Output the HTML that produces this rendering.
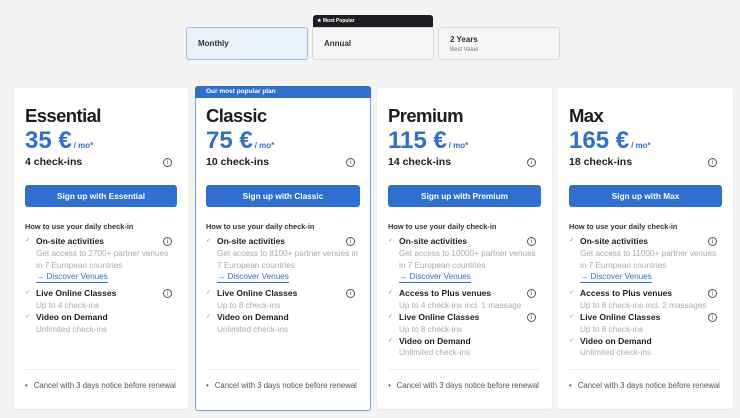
<!DOCTYPE html>
<html><head><meta charset="utf-8">
<style>
*{box-sizing:border-box;margin:0;padding:0}
body{width:740px;height:418px;background:#f4f4f5;font-family:"Liberation Sans",sans-serif;position:relative;overflow:hidden;color:#1d1d1f}
.tog{position:absolute;top:27px;height:33px;width:122px;border:1px solid #d8d9dc;border-radius:3px;background:#f6f6f7;font-size:8px;font-weight:bold;padding-left:11px;display:flex;flex-direction:column;justify-content:center;color:#333}
.tog small{font-weight:normal;font-size:6px;color:#777;margin-top:3px}
.card{position:absolute;top:88px;height:321px;background:#fff;border-radius:3px;box-shadow:0 1px 2px rgba(0,0,0,.05)}
.in{position:absolute;left:11px;right:11px;top:0}
h2{position:absolute;top:17px;font-size:18.5px;font-weight:bold;letter-spacing:-.6px}
.pr{position:absolute;top:39px;font-size:24px;font-weight:bold;color:#2f6fd1;white-space:nowrap}
.pr span{font-size:8px;font-weight:bold;margin-left:2px}
.ci{position:absolute;top:68px;left:0;right:0;font-size:10.5px;font-weight:bold}
.info{display:inline-block;width:9px;height:9px;border:1px solid #555;border-radius:50%;font-size:6.5px;line-height:7px;text-align:center;color:#555;font-weight:normal;font-family:"Liberation Sans",sans-serif}
.ci .info{position:absolute;right:5px;top:2px}
.btn{position:absolute;top:97px;left:0;right:0;height:22px;background:#2f6fd1;color:#fff;border-radius:3px;font-size:8.3px;font-weight:bold;text-align:center;line-height:22px}
.list{position:absolute;top:134px;left:0;right:0}
.hd{font-size:7.4px;font-weight:bold;color:#333;margin-bottom:5px}
.it{position:relative;padding-left:11px;font-size:8.5px;line-height:11.8px}
.it b{color:#222;display:block}
.it:before{content:"✓";position:absolute;left:0;top:0;font-size:6px;color:#888}
.it .s{color:#a8aab3;font-size:8.2px;white-space:nowrap}
.it .info{position:absolute;right:5px;top:1px}
.dv{color:#2f6fd1;font-size:8.2px;border-bottom:1px solid #2f6fd1;display:inline-block;line-height:10px;margin:0 0 5px}
.ft{position:absolute;top:281px;left:0;right:0;border-top:1px solid #eee;padding-top:11px;font-size:7.8px;color:#555;white-space:nowrap}
.ft:before{content:"•";margin-right:6px}
</style></head><body>
<div class="tog" style="left:186px;background:#eaf1fb;border-color:#9dbde9">Monthly</div>
<div style="position:absolute;left:313px;top:15px;width:120px;height:12px;background:#1d1e22;border-radius:3px 3px 0 0;color:#fff;font-size:5px;font-weight:bold;padding:3px 0 0 4px">★ Most Popular</div>
<div class="tog" style="left:312px">Annual</div>
<div class="tog" style="left:438px">2 Years<small>Best Value</small></div>

<div class="card" style="left:14px;width:174px"><div class="in">
<h2>Essential</h2><div class="pr">35 €<span>/ mo*</span></div>
<div class="ci">4 check-ins <span class="info">i</span></div>
<div class="btn">Sign up with Essential</div>
<div class="list"><div class="hd">How to use your daily check-in</div>
<div class="it"><b>On-site activities</b><span class="info">i</span><div class="s">Get access to 2700+ partner venues<br>in 7 European countries</div><span class="dv">→ Discover Venues</span></div>
<div class="it"><b>Live Online Classes</b><span class="info">i</span><div class="s">Up to 4 check-ins</div></div>
<div class="it"><b>Video on Demand</b><div class="s">Unlimited check-ins</div></div>
</div><div class="ft">Cancel with 3 days notice before renewal</div></div></div>

<div class="card" style="left:195px;width:176px;top:86px;height:325px;border:1px solid #7aa6e6">
<div style="position:absolute;left:-1px;right:-1px;top:-1px;height:12px;background:#2f6fd1;color:#fff;font-size:6.5px;font-weight:bold;padding:2px 0 0 11px;border-radius:3px 3px 0 0">Our most popular plan</div>
<div class="in" style="left:10px;right:10px;top:1px">
<h2>Classic</h2><div class="pr">75 €<span>/ mo*</span></div>
<div class="ci">10 check-ins <span class="info">i</span></div>
<div class="btn">Sign up with Classic</div>
<div class="list"><div class="hd">How to use your daily check-in</div>
<div class="it"><b>On-site activities</b><span class="info">i</span><div class="s">Get access to 8100+ partner venues in<br>7 European countries</div><span class="dv">→ Discover Venues</span></div>
<div class="it"><b>Live Online Classes</b><span class="info">i</span><div class="s">Up to 8 check-ins</div></div>
<div class="it"><b>Video on Demand</b><div class="s">Unlimited check-ins</div></div>
</div><div class="ft">Cancel with 3 days notice before renewal</div></div></div>

<div class="card" style="left:377px;width:175px"><div class="in">
<h2>Premium</h2><div class="pr">115 €<span>/ mo*</span></div>
<div class="ci">14 check-ins <span class="info">i</span></div>
<div class="btn">Sign up with Premium</div>
<div class="list"><div class="hd">How to use your daily check-in</div>
<div class="it"><b>On-site activities</b><span class="info">i</span><div class="s">Get access to 10000+ partner venues<br>in 7 European countries</div><span class="dv">→ Discover Venues</span></div>
<div class="it"><b>Access to Plus venues</b><span class="info">i</span><div class="s">Up to 4 check-ins incl. 1 massage</div></div>
<div class="it"><b>Live Online Classes</b><span class="info">i</span><div class="s">Up to 8 check-ins</div></div>
<div class="it"><b>Video on Demand</b><div class="s">Unlimited check-ins</div></div>
</div><div class="ft">Cancel with 3 days notice before renewal</div></div></div>

<div class="card" style="left:558px;width:175px"><div class="in">
<h2>Max</h2><div class="pr">165 €<span>/ mo*</span></div>
<div class="ci">18 check-ins <span class="info">i</span></div>
<div class="btn">Sign up with Max</div>
<div class="list"><div class="hd">How to use your daily check-in</div>
<div class="it"><b>On-site activities</b><span class="info">i</span><div class="s">Get access to 11000+ partner venues<br>in 7 European countries</div><span class="dv">→ Discover Venues</span></div>
<div class="it"><b>Access to Plus venues</b><span class="info">i</span><div class="s">Up to 8 check-ins incl. 2 massages</div></div>
<div class="it"><b>Live Online Classes</b><span class="info">i</span><div class="s">Up to 8 check-ins</div></div>
<div class="it"><b>Video on Demand</b><div class="s">Unlimited check-ins</div></div>
</div><div class="ft">Cancel with 3 days notice before renewal</div></div></div>
</body></html>
